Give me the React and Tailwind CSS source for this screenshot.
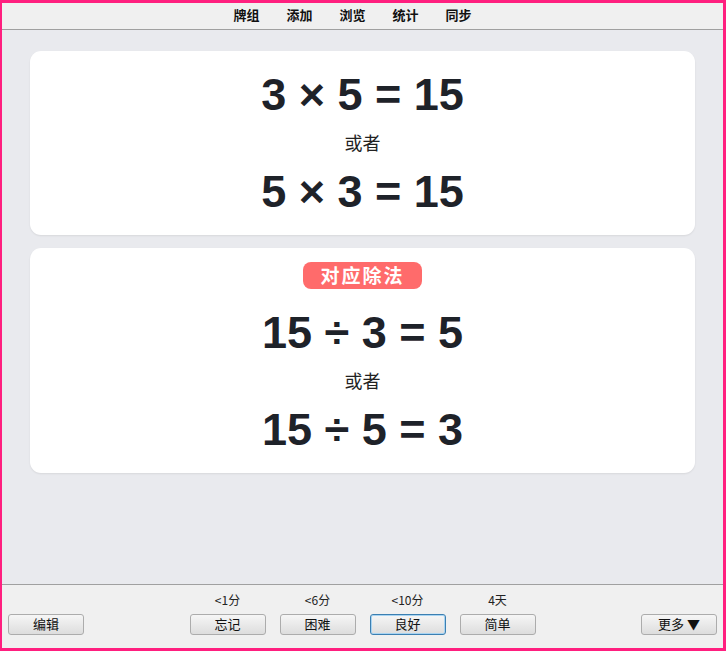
import React from 'react';

const nav = ['牌组', '添加', '浏览', '统计', '同步'];

const answers = [
  { label: '<1分', text: '忘记' },
  { label: '<6分', text: '困难' },
  { label: '<10分', text: '良好', focused: true },
  { label: '4天', text: '简单' },
];

const cjk = { fontFamily: '"Noto Sans CJK SC", "Liberation Sans", sans-serif' };
const num = { fontFamily: '"Liberation Sans", Arial, sans-serif' };

function Btn({ children, focused }) {
  return (
    <button
      className={`w-[76px] h-[21px] pb-[2px] rounded-[3px] border text-[13px] leading-none text-[#111] bg-gradient-to-b from-[#f6f6f6] to-[#dddddd] ${
        focused ? 'border-[#3c7fb1] shadow-[inset_0_0_0_1px_#a8d4f2]' : 'border-[#acacac]'
      }`}
      style={cjk}
    >
      {children}
    </button>
  );
}

function Equation({ children }) {
  return (
    <div className="h-[52px] flex items-center justify-center text-[45px] font-bold text-[#1e2229] leading-none" style={num}>
      {children}
    </div>
  );
}

function Or() {
  return (
    <div className="h-[45px] flex items-center justify-center text-[18px] text-[#222]" style={cjk}>
      或者
    </div>
  );
}

export default function App() {
  return (
    <div className="w-[726px] h-[651px] flex flex-col border-l-2 border-t-[3px] border-r-[3px] border-b-[3px] border-[#ff1f7f] bg-[#e9eaee]">
      {/* top bar */}
      <div className="h-[27px] pb-[2px] bg-[#f0f0f0] border-b border-[#a0a0a0] flex items-center justify-center gap-[27px] pr-[20px]" style={cjk}>
        {nav.map((n) => (
          <span key={n} className="text-[13px] font-bold text-[#111]">{n}</span>
        ))}
      </div>

      {/* cards */}
      <div className="flex-1 px-[28px] pt-[21px] flex flex-col gap-[13px]">
        <div className="bg-white rounded-[11px] shadow-[0_1px_2px_rgba(0,0,0,0.08)] pt-[17px] pb-[18px]">
          <Equation>3 × 5 = 15</Equation>
          <Or />
          <Equation>5 × 3 = 15</Equation>
        </div>

        <div className="bg-white rounded-[11px] shadow-[0_1px_2px_rgba(0,0,0,0.08)] pt-[14px] pb-[18px] flex flex-col items-center">
          <div className="h-[27px] px-[17px] pb-[1px] rounded-[8px] bg-[#ff6b6b] text-white text-[19px] font-bold tracking-[2px] flex items-center" style={cjk}>
            对应除法
          </div>
          <div className="w-full mt-[17px]">
            <Equation>15 ÷ 3 = 5</Equation>
            <Or />
            <Equation>15 ÷ 5 = 3</Equation>
          </div>
        </div>
      </div>

      {/* bottom bar */}
      <div className="h-[64px] bg-[#f0f0f0] border-t border-[#a0a0a0] px-[6px] pb-[13px] flex items-end justify-between" style={cjk}>
        <Btn>编辑</Btn>
        <div className="flex gap-[14px]">
          {answers.map((a) => (
            <div key={a.text} className="flex flex-col items-center gap-[6px]">
              <span className="h-[16px] leading-[16px] text-[12px] text-[#222]">{a.label}</span>
              <Btn focused={a.focused}>{a.text}</Btn>
            </div>
          ))}
        </div>
        <Btn>更多 ▼</Btn>
      </div>
    </div>
  );
}
